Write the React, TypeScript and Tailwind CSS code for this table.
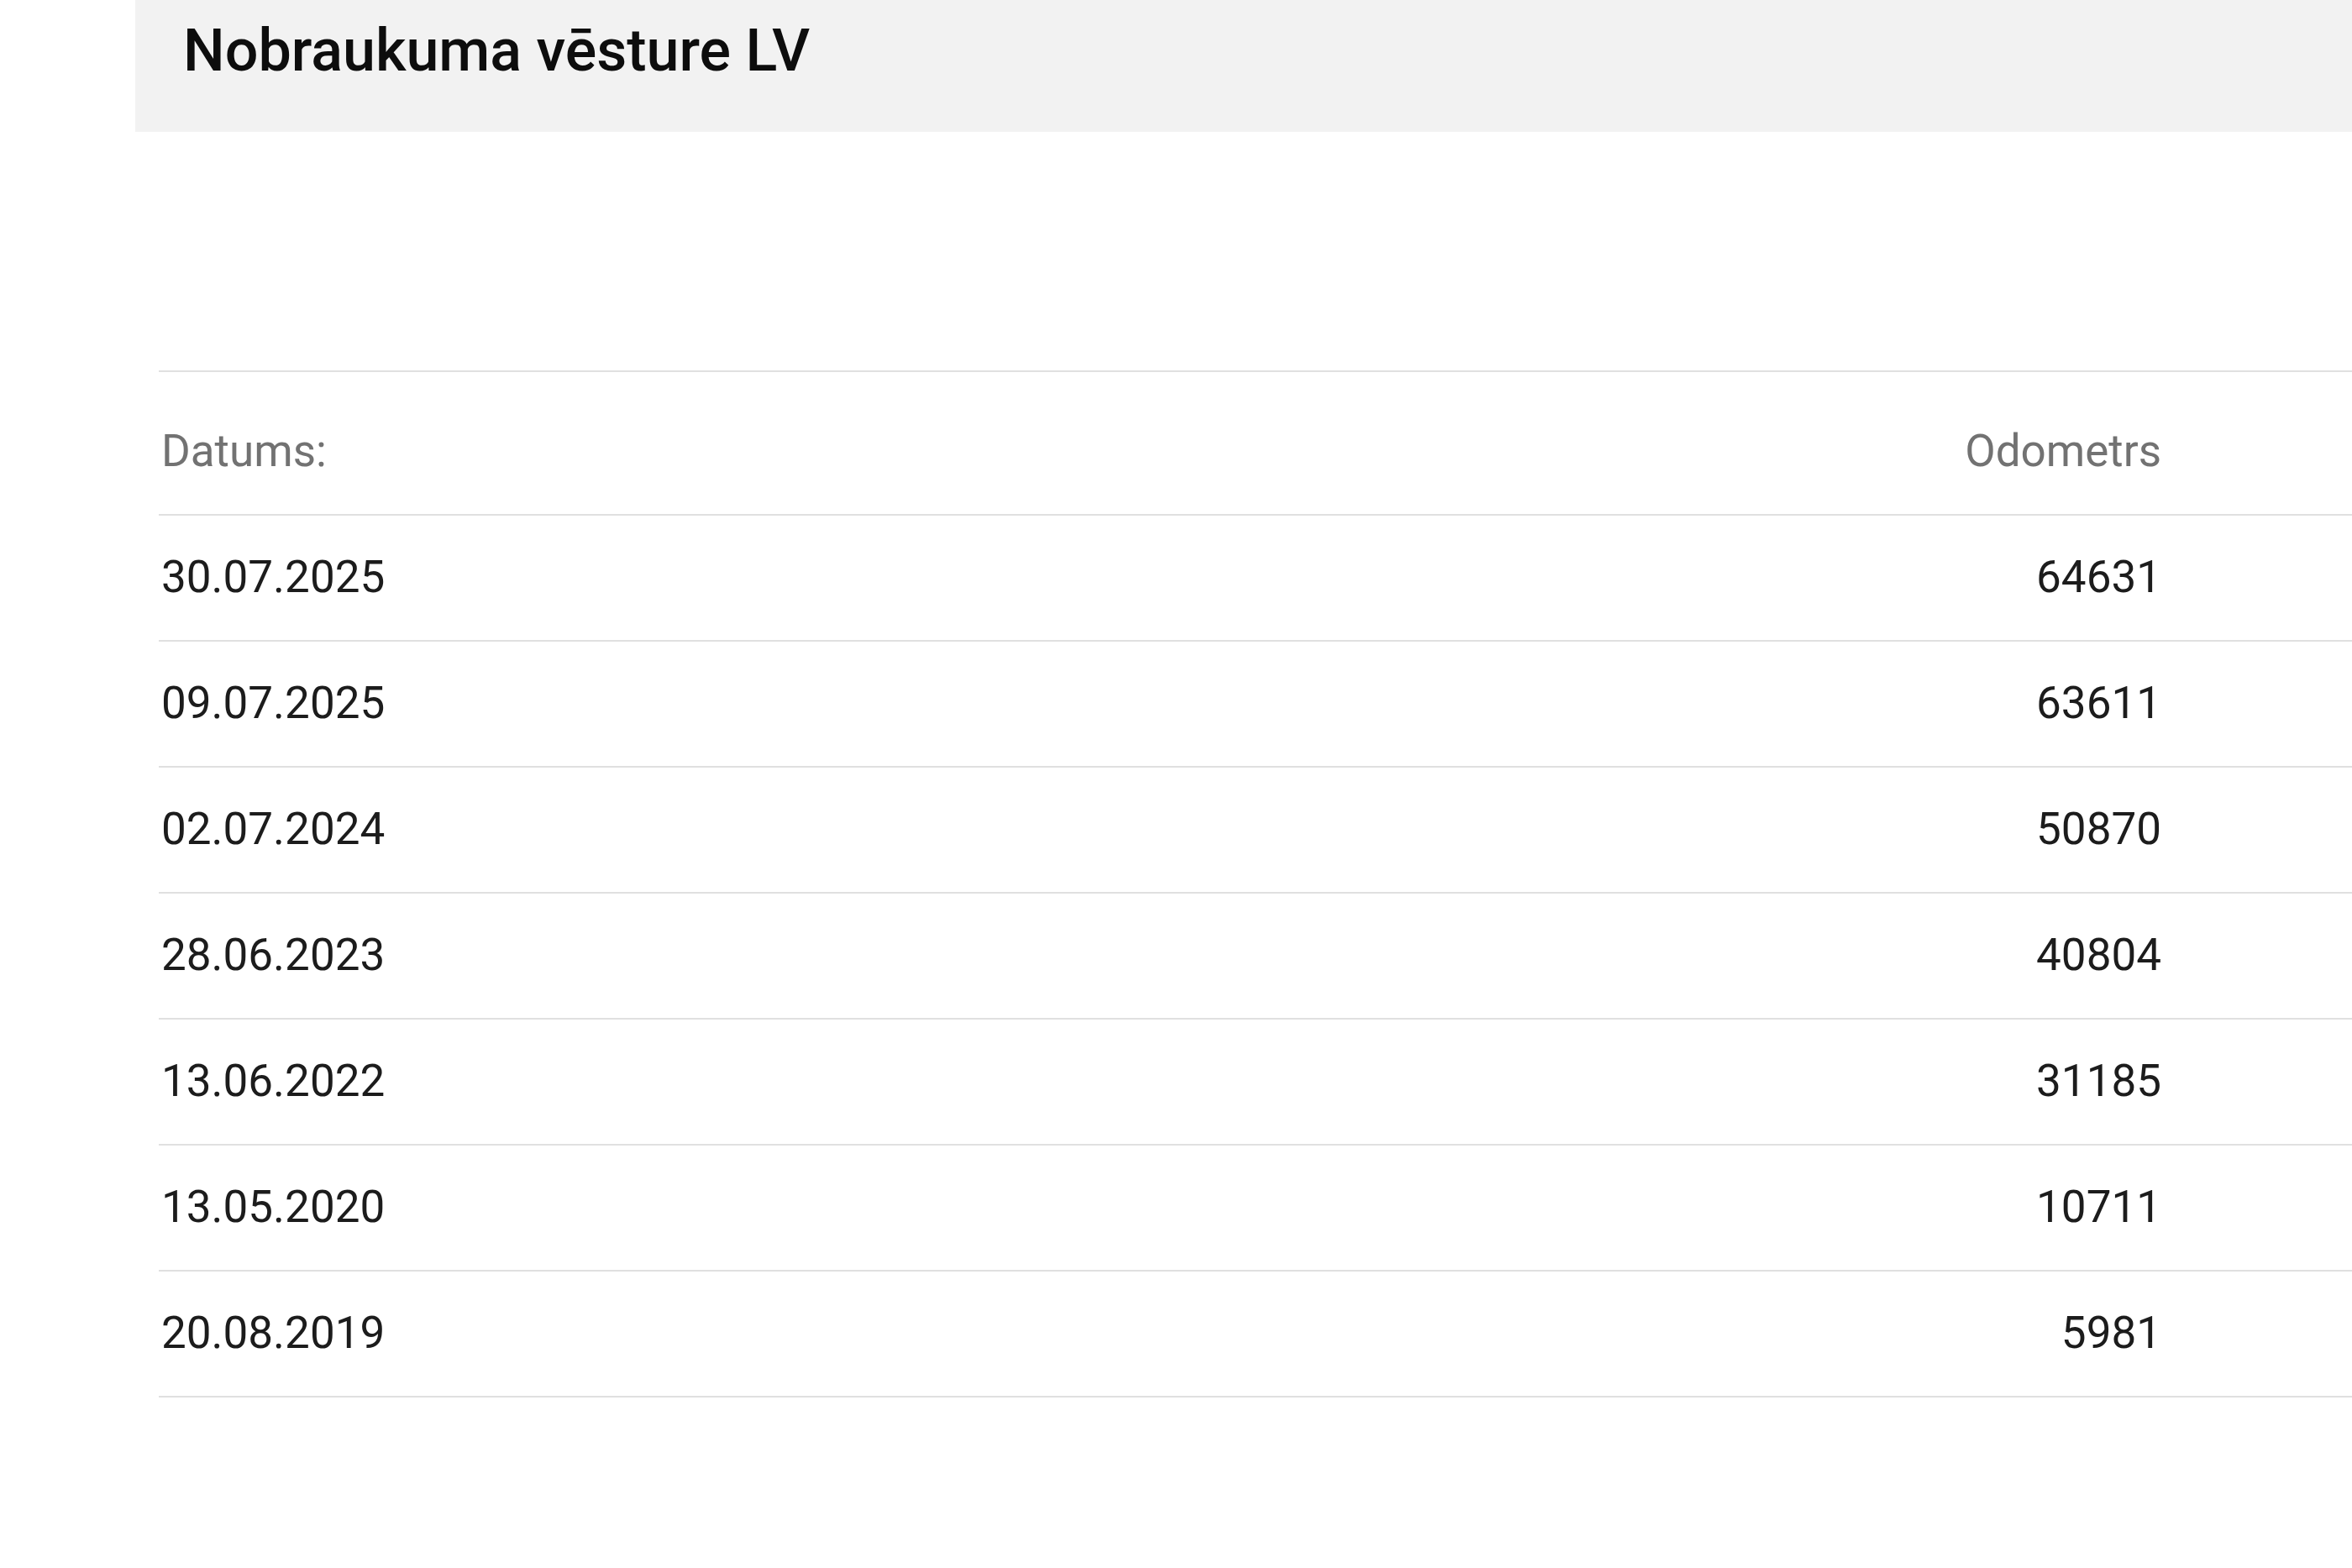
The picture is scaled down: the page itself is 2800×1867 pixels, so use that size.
const ROWS = [
  { date: "30.07.2025", odometer: "64631" },
  { date: "09.07.2025", odometer: "63611" },
  { date: "02.07.2024", odometer: "50870" },
  { date: "28.06.2023", odometer: "40804" },
  { date: "13.06.2022", odometer: "31185" },
  { date: "13.05.2020", odometer: "10711" },
  { date: "20.08.2019", odometer: "5981" },
];

export default function App() {
  return (
    <div className="min-h-[1867px] w-full overflow-hidden bg-white font-['Roboto',sans-serif]">
      <header className="ml-[161px] h-[157px] bg-[#f2f2f2] pl-[57px] pt-[25px]">
        <h1 className="text-[70px] font-medium leading-[70px] text-[#0d0d0d]">
          Nobraukuma vēsture LV
        </h1>
      </header>

      <section className="ml-[189px] mt-[284px] border-t-2 border-[#e0e0e0]">
        <div className="flex h-[171px] items-center border-b-2 border-[#e0e0e0] pl-[3px] pr-[227px] pt-[20px] text-[53px] text-[#727272]">
          <span className="flex-1">Datums:</span>
          <span>Odometrs</span>
        </div>
        {ROWS.map((row) => (
          <div
            key={row.date}
            className="flex h-[150px] items-center border-b-2 border-[#e0e0e0] pl-[3px] pr-[227px] text-[53px] text-[#1c1c1c]"
          >
            <span className="flex-1">{row.date}</span>
            <span>{row.odometer}</span>
          </div>
        ))}
      </section>
    </div>
  );
}
